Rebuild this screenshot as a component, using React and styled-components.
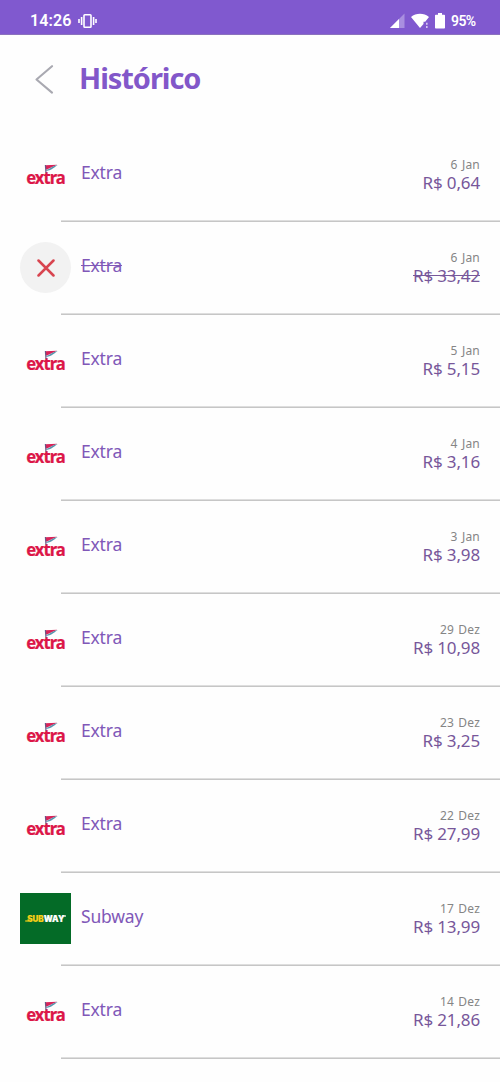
import React from "react";
import styled, { createGlobalStyle } from "styled-components";

const GlobalStyle = createGlobalStyle`
  * { box-sizing: border-box; }
  body { margin: 0; background: #fefefe; }
`;

const Screen = styled.main`
  width: 500px;
  height: 1082px;
  overflow: hidden;
  background: #fefefe;
  font-family: "Noto Sans", "Open Sans", sans-serif;
`;

const StatusBar = styled.div`
  display: flex;
  justify-content: space-between;
  height: 35px;
  padding: 6px 24px 0 30px;
  background: #8059cf;
  border-bottom: 1px solid #8b72bd;
  color: #fff;
  font-family: Roboto, sans-serif;
`;

const StatusGroup = styled.div`
  display: flex;
  align-items: center;
  height: 29px;
`;

const StatusIcons = styled(StatusGroup)`
  gap: 6px;
`;

const Clock = styled.span`
  width: 42px;
  margin-right: 6px;
  font-size: 16px;
  font-weight: 600;
  letter-spacing: 0.1px;
`;

const BatteryLevel = styled.span`
  width: 25px;
  font-size: 14px;
  font-weight: 600;
  letter-spacing: -0.6px;
  white-space: nowrap;
`;

const Header = styled.header`
  display: flex;
  align-items: center;
  height: 87px;
  padding: 0 0 0 35px;
  gap: 25px;
`;

const BackButton = styled.button`
  display: flex;
  padding: 0;
  margin-top: 1px;
  border: 0;
  background: none;
`;

const Title = styled.h1`
  margin: -2px 0 0;
  color: #8257c9;
  font-size: 29px;
  line-height: 40px;
  font-weight: 700;
  letter-spacing: -1.05px;
`;

const List = styled.ul`
  margin: 0;
  padding: 7px 0 0;
  list-style: none;
`;

const Row = styled.li`
  display: flex;
  height: 93px;
  padding: 20px 20px 0;
`;

const Body = styled.div`
  display: flex;
  flex: 1;
  justify-content: space-between;
  padding-left: 10px;
`;

const Divider = styled.hr`
  height: 2px;
  margin: -2px 0 0 61px;
  border: 0;
  background: linear-gradient(#dedede 50%, #c6c6c6 50%);
`;

const Store = styled.span`
  height: 24px;
  margin-top: 11px;
  color: #8058b8;
  font-size: 17.5px;
  line-height: 24px;
  letter-spacing: -0.2px;
  text-decoration: ${(p) => (p.$cancelled ? "line-through" : "none")};
`;

const Details = styled.div`
  display: flex;
  flex-direction: column;
  align-items: flex-end;
  padding-top: 8px;
`;

const DateText = styled.span`
  color: #858585;
  font-size: 12px;
  line-height: 16px;
  letter-spacing: 0.2px;
  word-spacing: 1px;
`;

const Amount = styled.span`
  color: #77579a;
  font-size: 17px;
  line-height: 20px;
  letter-spacing: -0.15px;
  text-decoration: ${(p) => (p.$cancelled ? "line-through" : "none")};
`;

const LogoBox = styled.div`
  display: flex;
  align-items: center;
  justify-content: center;
  width: 51px;
  height: 51px;
  border-radius: ${(p) => (p.$round ? "50%" : "0")};
  background: ${(p) => p.$bg || "transparent"};
`;

const VibrateIcon = () => (
  <svg width="20" height="16" viewBox="0 0 20 16" fill="none" stroke="#fff">
    <rect x="6" y="1.8" width="7" height="12.4" rx="0.8" strokeWidth="1.6" />
    <path d="M3.6 4v8M15.6 4v8M1 6v4M18 6v4" strokeWidth="1.6" />
  </svg>
);

const SignalIcon = () => (
  <svg width="15" height="16" viewBox="0 0 15 16">
    <path d="M14.5 0.5V15H0z" fill="#a98fe0" />
    <path d="M9 6V15H0z" fill="#fff" />
  </svg>
);

const WifiIcon = () => (
  <svg width="18" height="16" viewBox="0 0 18 16">
    <path d="M0 4C5-.4 13-.4 18 4L14.2 8.7H12.5V11L9 15z" fill="#fff" />
    <path d="M15.8 9.8v1.9M15.8 13v1.9" stroke="#d5c7f0" strokeWidth="1.6" />
  </svg>
);

const BatteryIcon = () => (
  <svg width="10" height="16" viewBox="0 0 10 16">
    <path d="M3 0h4v1.7h2.2q.8 0 .8.8v12.2q0 .8-.8.8H.8q-.8 0-.8-.8V2.5q0-.8.8-.8H3z" fill="#fff" />
  </svg>
);

const ExtraLogo = () => (
  <svg width="51" height="51" viewBox="0 0 51 51">
    <text x="6.2" y="34.8" textLength="38.7" lengthAdjust="spacingAndGlyphs" fill="#dc1648" stroke="#dc1648" strokeWidth="0.2" fontFamily="Noto Sans, sans-serif" fontWeight="700" fontSize="17" letterSpacing="-1">extra</text>
    <path d="M25.2 16.2L37.2 15.8L26.2 20.8z" fill="#d92359" />
    <path d="M26.2 21C30 20 32.2 16.8 37.7 16C35 17.8 32 21.2 26.4 22z" fill="#5796ae" />
    <path d="M25.4 16L26 24" stroke="#6c5684" strokeWidth="1.2" />
  </svg>
);

const SubwayLogo = () => (
  <svg width="51" height="51" viewBox="0 0 51 51" fontFamily="Inter, sans-serif" fontWeight="900" fontSize="8.3">
    <text x="7.2" y="28.5" textLength="16.4" lengthAdjust="spacingAndGlyphs" fill="#f6cf18" stroke="#f6cf18" strokeWidth="0.2">SUB</text>
    <text x="23.8" y="28.5" textLength="20.6" lengthAdjust="spacingAndGlyphs" fill="#fff" stroke="#fff" strokeWidth="0.2">WAY</text>
    <path d="M42.5 23h3.5" stroke="#fff" strokeWidth="1.2" />
    <path d="M5.2 28h3.5" stroke="#f6cf18" strokeWidth="1.2" />
  </svg>
);

const CancelIcon = () => (
  <svg width="18" height="18" viewBox="0 0 18 18">
    <path d="M1.5 1.5l15 15M16.5 1.5l-15 15" fill="none" stroke="#d84550" strokeWidth="2.5" strokeLinecap="round" />
  </svg>
);

const purchases = [
  { date: "6 Jan", amount: "R$ 0,64" },
  { date: "6 Jan", amount: "R$ 33,42", cancelled: true },
  { date: "5 Jan", amount: "R$ 5,15" },
  { date: "4 Jan", amount: "R$ 3,16" },
  { date: "3 Jan", amount: "R$ 3,98" },
  { date: "29 Dez", amount: "R$ 10,98" },
  { date: "23 Dez", amount: "R$ 3,25" },
  { date: "22 Dez", amount: "R$ 27,99" },
  { date: "17 Dez", amount: "R$ 13,99", store: "Subway" },
  { date: "14 Dez", amount: "R$ 21,86" },
];

function StoreLogo({ store, cancelled }) {
  if (cancelled) return <LogoBox $round $bg="#f2f2f2"><CancelIcon /></LogoBox>;
  if (store === "Subway") return <LogoBox $bg="#046b27"><SubwayLogo /></LogoBox>;
  return <LogoBox><ExtraLogo /></LogoBox>;
}

function Purchase({ store = "Extra", date, amount, cancelled }) {
  return (
    <>
      <Row>
        <StoreLogo store={store} cancelled={cancelled} />
        <Body>
          <Store $cancelled={cancelled}>{store}</Store>
          <Details>
            <DateText>{date}</DateText>
            <Amount $cancelled={cancelled}>{amount}</Amount>
          </Details>
        </Body>
      </Row>
      <Divider />
    </>
  );
}

export default function App() {
  return (
    <Screen>
      <GlobalStyle />
      <StatusBar>
        <StatusGroup><Clock>14:26</Clock><VibrateIcon /></StatusGroup>
        <StatusIcons>
          <SignalIcon />
          <WifiIcon />
          <BatteryIcon />
          <BatteryLevel>95%</BatteryLevel>
        </StatusIcons>
      </StatusBar>
      <Header>
        <BackButton aria-label="Voltar">
          <svg width="19" height="29" viewBox="0 0 19 29">
            <path d="M17 1.2L1.5 14.5L17 27.6" fill="none" stroke="#a9a9b1" strokeWidth="2.1" strokeLinecap="round" strokeLinejoin="round" />
          </svg>
        </BackButton>
        <Title>Histórico</Title>
      </Header>
      <List>
        {purchases.map((p) => <Purchase key={p.date + p.amount} {...p} />)}
      </List>
    </Screen>
  );
}
